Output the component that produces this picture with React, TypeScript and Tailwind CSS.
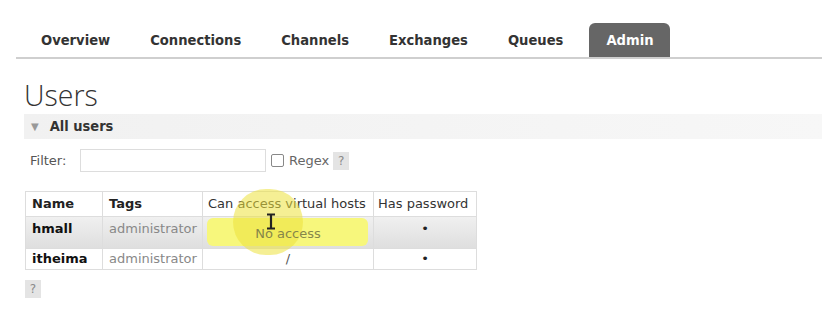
import React from 'react';

const tabs = ['Overview', 'Connections', 'Channels', 'Exchanges', 'Queues', 'Admin'];

const users = [
  { name: 'hmall', tags: 'administrator', vhosts: 'No access', hover: true },
  { name: 'itheima', tags: 'administrator', vhosts: '/', hover: false },
];

const HelpBox: React.FC<{ className?: string }> = ({ className }) => (
  <span
    className={`inline-flex items-center justify-center w-4 h-[18px] bg-[#e4e4e4] text-[#8a8a8a] text-[12px] ${className || ''}`}
  >
    ?
  </span>
);

export default function App() {
  return (
    <div className="w-[822px] h-[327px] bg-white overflow-hidden font-['DejaVu_Sans',sans-serif] text-[13px] text-[#444]">
      {/* Main navigation */}
      <nav className="mt-[23px] ml-4 pl-[5px] flex items-end border-b-2 border-[#cfcfcf] font-['DejaVu_Sans_Condensed','DejaVu_Sans',sans-serif] font-bold text-[14.6px]">
        {tabs.map((t) => (
          <div
            key={t}
            className={`h-[34px] flex items-center ${
              t === 'Admin'
                ? 'ml-[6px] bg-[#666] text-white rounded-t-md px-[17px]'
                : 'text-[#333] px-5'
            }`}
          >
            {t}
          </div>
        ))}
      </nav>

      <div className="pl-6">
        <h1 className="mt-[22px] font-['Open_Sans',sans-serif] font-light text-[28.5px] leading-[28px] text-[#333]">
          Users
        </h1>

        <div className="mt-[5px] h-[25px] bg-gradient-to-r from-[#f1f1f1] to-[#f7f7f7] flex items-center pl-[7px]">
          <span className="text-[#999] text-[10px] mr-[11px]">▼</span>
          <span className="font-['DejaVu_Sans_Condensed','DejaVu_Sans',sans-serif] font-bold text-[14.5px] text-[#333]">
            All users
          </span>
        </div>

        <div className="mt-[10px] flex items-center pl-[6px]">
          <span className="text-[13px] text-[#555] w-[50px]">Filter:</span>
          <div className="w-[186px] h-[23px] border border-[#ddd] bg-white" />
          <span className="ml-[5px] w-[13px] h-[13px] border border-[#888] rounded-[2px] bg-white" />
          <span className="ml-[5px] text-[13px] text-[#666]">Regex</span>
          <HelpBox className="ml-[4px]" />
        </div>

        {/* Users table */}
        <div className="relative mt-[19px] w-fit ml-px">
          <table className="border-collapse border border-[#ddd]">
            <thead>
              <tr className="h-[25px]">
                <th className="w-[77px] text-left font-bold pl-[6px] text-[#222] border border-[#ddd]">Name</th>
                <th className="w-[100px] text-left font-bold pl-[6px] text-[#222] border border-[#ddd]">Tags</th>
                <th className="w-[171px] text-left font-normal pl-[5px] text-[#333] border border-[#ddd]">
                  Can access virtual hosts
                </th>
                <th className="w-[103px] text-left font-normal pl-[4px] text-[#333] border border-[#ddd]">
                  Has password
                </th>
              </tr>
            </thead>
            <tbody>
              {users.map((u) => (
                <tr
                  key={u.name}
                  className={
                    u.hover
                      ? 'h-[32px] bg-gradient-to-b from-[#f0f0f0] to-[#dedede]'
                      : 'h-[21px] bg-white'
                  }
                >
                  <td className={`pl-[6px] font-bold text-[#111] border border-[#ddd] ${u.hover ? 'align-top pt-[2px]' : ''}`}>
                    {u.name}
                  </td>
                  <td className={`pl-[6px] text-[#888] border border-[#ddd] ${u.hover ? 'align-top pt-[2px]' : ''}`}>
                    {u.tags}
                  </td>
                  <td className={`text-center border border-[#ddd] ${u.hover ? 'pt-[3px]' : 'text-[#555]'}`}>
                    <span className={u.hover ? 'relative z-10 text-[#86864a]' : ''}>{u.vhosts}</span>
                  </td>
                  <td className={`text-center text-[#222] border border-[#ddd] ${u.hover ? 'align-top pt-[2px]' : ''}`}>
                    •
                  </td>
                </tr>
              ))}
            </tbody>
          </table>

          {/* Presenter highlight over the "No access" cell */}
          <div className="absolute left-[182px] top-[27px] w-[161px] h-[28px] rounded-md bg-[#f7f77c] pointer-events-none" />
          <div className="absolute left-[208px] top-[-2px] w-[70px] h-[66px] rounded-full bg-[#ece13c]/55 pointer-events-none" />
          <svg
            className="absolute z-20 left-[241px] top-[22px] pointer-events-none"
            width="10"
            height="17"
            viewBox="0 0 10 17"
          >
            <path d="M1 1.5h8M5 1.5v14M1 15.5h8" stroke="#222" strokeWidth="2.2" fill="none" />
          </svg>
        </div>

        <HelpBox className="mt-[10px] ml-px" />
      </div>
    </div>
  );
}
